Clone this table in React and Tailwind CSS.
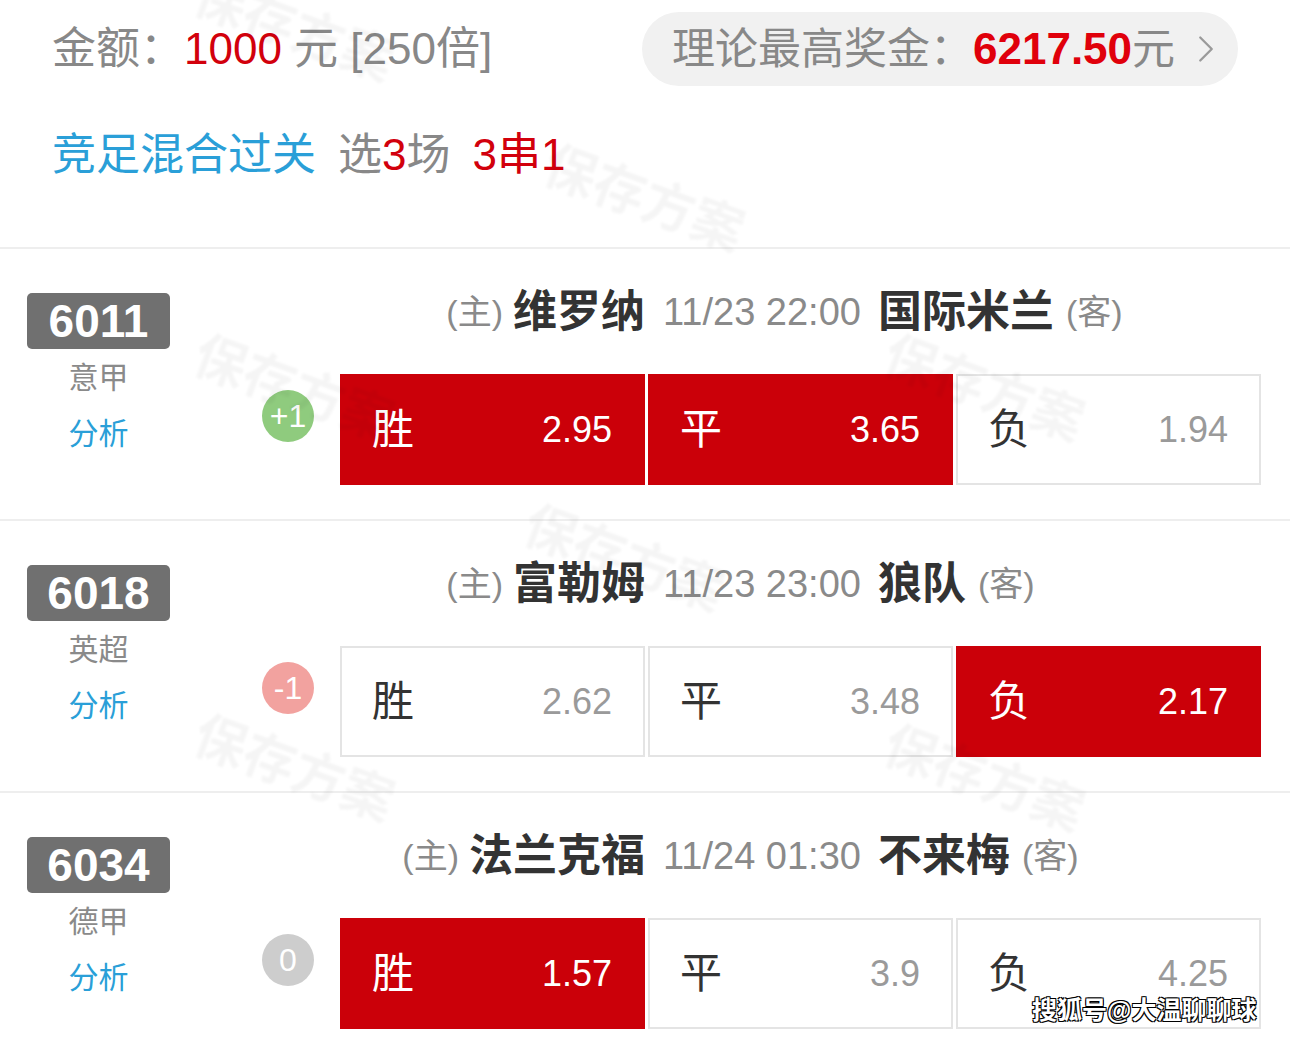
import React from 'react';
import { ChevronRight } from 'lucide-react';

const matches = [
  {
    no: '6011',
    league: '意甲',
    home: '维罗纳',
    time: '11/23 22:00',
    away: '国际米兰',
    hc: '+1',
    hcClass: 'bg-[#8fcb7e]',
    odds: [
      { label: '胜', value: '2.95', on: true },
      { label: '平', value: '3.65', on: true },
      { label: '负', value: '1.94', on: false },
    ],
  },
  {
    no: '6018',
    league: '英超',
    home: '富勒姆',
    time: '11/23 23:00',
    away: '狼队',
    hc: '-1',
    hcClass: 'bg-[#f2a29f]',
    odds: [
      { label: '胜', value: '2.62', on: false },
      { label: '平', value: '3.48', on: false },
      { label: '负', value: '2.17', on: true },
    ],
  },
  {
    no: '6034',
    league: '德甲',
    home: '法兰克福',
    time: '11/24 01:30',
    away: '不来梅',
    hc: '0',
    hcClass: 'bg-[#cdcdcd]',
    odds: [
      { label: '胜', value: '1.57', on: true },
      { label: '平', value: '3.9', on: false },
      { label: '负', value: '4.25', on: false },
    ],
  },
];

// faint "保存方案" stamps sprinkled over the page
const stamps = [
  { x: 190, y: -10 },
  { x: 540, y: 160 },
  { x: 190, y: 350 },
  { x: 880, y: 350 },
  { x: 520, y: 520 },
  { x: 190, y: 730 },
  { x: 880, y: 740 },
];

const OddsCell = ({ label, value, on }) => (
  <div
    className={`flex items-center justify-between w-[305px] h-[111px] pl-[30px] pr-[31px] ${
      on ? 'bg-[#cb0009] border-2 border-[#cb0009]' : 'bg-white border-2 border-[#e4e4e4]'
    }`}
  >
    <span className={`text-[42px] leading-none ${on ? 'text-white' : 'text-[#333333]'}`}>{label}</span>
    <span className={`text-[36px] leading-none ${on ? 'text-white' : 'text-[#9a9a9a]'}`}>{value}</span>
  </div>
);

const MatchRow = ({ m }) => (
  <div className="flex h-[270px] pl-[27px]">
    <div className="flex flex-col items-center w-[143px] pt-[44px]">
      <div className="flex items-center justify-center w-[143px] h-[56px] rounded-[5px] bg-[#707070] text-white text-[46px] font-bold leading-none">
        {m.no}
      </div>
      <div className="mt-[9px] text-[30px] leading-[40px] text-[#8a8a8a]">{m.league}</div>
      <div className="mt-[16px] text-[30px] leading-[40px] text-[#2a9fd8]">分析</div>
    </div>
    <div className="flex flex-col flex-1 pt-[35px]">
      <div className="flex items-center h-[56px] pl-[170px]">
        <div className="flex items-center justify-end w-[305px]">
          <span className="text-[34px] text-[#8a8a8a]">(主)</span>
          <span className="ml-[10px] text-[44px] font-bold text-[#333333]">{m.home}</span>
        </div>
        <span className="ml-[18px] text-[38px] text-[#8a8a8a]">{m.time}</span>
        <span className="ml-[17px] text-[44px] font-bold text-[#333333]">{m.away}</span>
        <span className="ml-[12px] text-[34px] text-[#8a8a8a]">(客)</span>
      </div>
      <div className="flex mt-[34px]">
        <div
          className={`flex items-center justify-center self-start mt-[16px] ml-[92px] w-[52px] h-[52px] rounded-full text-white text-[32px] leading-none ${m.hcClass}`}
        >
          {m.hc}
        </div>
        <div className="flex gap-[3px] ml-[26px]">
          {m.odds.map((o) => (
            <OddsCell key={o.label} {...o} />
          ))}
        </div>
      </div>
    </div>
  </div>
);

export default function App() {
  return (
    <div className="relative w-[1290px] h-[1039px] overflow-hidden bg-white font-['Liberation_Sans','Noto_Sans_CJK_SC',sans-serif]">
      <div className="h-[247px] px-[52px]">
        <div className="flex items-center justify-between pt-[12px]">
          <div className="text-[44px] leading-none text-[#888888] whitespace-pre">
            金额：<span className="text-[#d2000c]">1000</span> 元 [250倍]
          </div>
          <div className="flex items-center w-[596px] h-[74px] pl-[30px] rounded-full bg-[#f1f1f1]">
            <span className="text-[43px] leading-none text-[#888888]">理论最高奖金：</span>
            <span className="text-[44px] leading-none font-bold text-[#e0000b]">6217.50</span>
            <span className="text-[43px] leading-none text-[#888888]">元</span>
            <ChevronRight className="ml-[8px] text-[#9a9a9a]" size={46} strokeWidth={1.2} />
          </div>
        </div>
        <div className="flex items-center h-[56px] mt-[41px] text-[44px] leading-none">
          <span className="text-[#2a9fd8]">竞足混合过关</span>
          <span className="ml-[22px] text-[#888888]">
            选<span className="text-[#d2000c]">3</span>场
          </span>
          <span className="ml-[22px] text-[#d2000c]">3串1</span>
        </div>
      </div>

      {matches.map((m) => (
        <div key={m.no}>
          <div className="h-[2px] bg-[#eeeeee]" />
          <MatchRow m={m} />
        </div>
      ))}

      {stamps.map((s, i) => (
        <div
          key={i}
          className="absolute pointer-events-none rotate-[20deg] blur-[1px] text-[52px] font-bold text-black/[0.04] whitespace-nowrap"
          style={{ left: s.x, top: s.y }}
        >
          保存方案
        </div>
      ))}

      <div className="absolute left-[1032px] top-[998px] text-[25px] leading-none font-bold text-white [text-shadow:_-1px_-1px_0_#000,_1px_-1px_0_#000,_-1px_1px_0_#000,_1px_1px_0_#000] whitespace-nowrap">
        搜狐号@大温聊聊球
      </div>
    </div>
  );
}
